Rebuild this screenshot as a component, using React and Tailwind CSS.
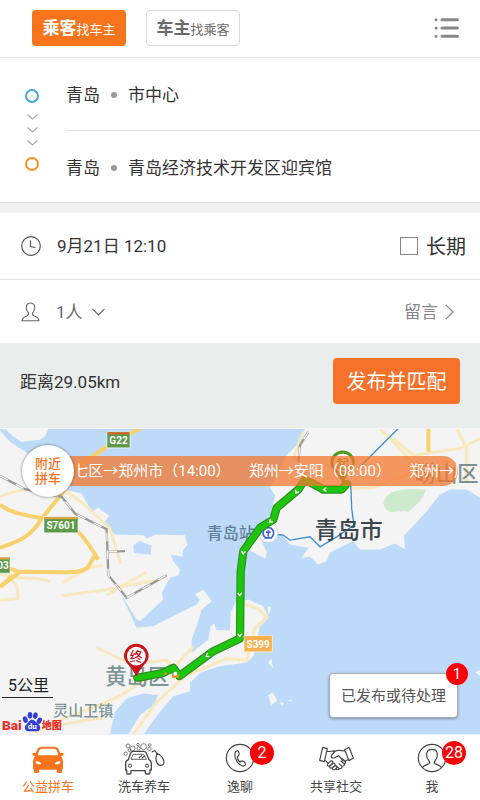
import React from "react";

const FONT = "font-['Roboto','Noto_Sans_CJK_SC',sans-serif]";

function Chevron({ className, points, box }) {
  return (
    <svg className={className} viewBox={box} fill="none" stroke="currentColor" strokeWidth="1.2" aria-hidden="true">
      <polyline points={points} />
    </svg>
  );
}

function Header() {
  return (
    <header className="flex h-[58px] items-center justify-between border-b border-[#e2e2e2] bg-white pl-8 pr-5 pb-px">
      <div className="flex gap-5">
        <button className="flex h-9 w-[94px] items-center justify-center rounded bg-[#f7741c] text-white">
          <span className="text-[17px] leading-6 font-bold">乘客</span>
          <span className="pt-[3px] text-[13px] leading-6">找车主</span>
        </button>
        <button className="flex h-9 w-[94px] items-center justify-center rounded border border-[#dcdcdc] bg-white text-[#6b6b6b]">
          <span className="text-[17px] leading-6 font-bold">车主</span>
          <span className="pt-[3px] text-[13px] leading-6">找乘客</span>
        </button>
      </div>
      <button aria-label="菜单">
        <svg className="h-5 w-[26px]" viewBox="0 0 26 20" stroke="#888" strokeWidth="3" strokeLinecap="round" aria-hidden="true">
          <path d="M2 1.8h.1M2 10h.1M2 18.2h.1M8 1.8h15.500M8 10h15.500M8 18.2h15.500" />
        </svg>
      </button>
    </header>
  );
}

function Place({ city, name, className }) {
  return (
    <button className={"flex w-full items-center pt-0.5 text-left text-[17px] leading-6 text-[#333] " + className}>
      <span>{city}</span>
      <span className="mx-[11px] size-[6px] rounded-full bg-[#999]" />
      <span>{name}</span>
    </button>
  );
}

function Route() {
  return (
    <section className="flex border-b border-[#dcdcdc] bg-white">
      <div className="flex w-[66px] shrink-0 flex-col items-center pt-[31px] pr-0.5 pb-[31px]">
        <span className="size-[14px] rounded-full border-2 border-[#45a5e2]" />
        <div className="flex flex-1 flex-col items-center justify-center gap-[7px] text-[#aaa]">
          <Chevron className="h-[6px] w-[11px]" box="0 0 11 6" points="0.500,0.500 5.500,5 10.500,0.500" />
          <Chevron className="h-[6px] w-[11px]" box="0 0 11 6" points="0.500,0.500 5.500,5 10.500,0.500" />
          <Chevron className="h-[6px] w-[11px]" box="0 0 11 6" points="0.500,0.500 5.500,5 10.500,0.500" />
        </div>
        <span className="size-[14px] rounded-full border-2 border-[#f8931f]" />
      </div>
      <div className="flex-1">
        <Place city="青岛" name="市中心" className="h-[73px] border-b border-[#e6e6e6]" />
        <Place city="青岛" name="青岛经济技术开发区迎宾馆" className="h-[71px]" />
      </div>
    </section>
  );
}

function Options() {
  return (
    <section className="border-t-[10px] border-[#f1f1f1] bg-white">
      <div className="flex h-[67px] items-center justify-between border-b border-[#e4e4e4] pl-[21px] pr-[14px]">
        <button className="flex items-center gap-4 text-[17px] leading-6 text-[#333]">
          <svg className="size-5" viewBox="0 0 20 20" fill="none" stroke="#555" strokeWidth="1.200" aria-hidden="true">
            <circle cx="10" cy="10" r="9.300" />
            <path d="M9.500 4.500v6l5 1" />
          </svg>
          <span>9月21日 12:10</span>
        </button>
        <label className="flex items-center gap-2 text-xl leading-6 text-[#333]">
          <input type="checkbox" className="size-[18px] appearance-none border border-[#888] bg-white checked:bg-[#f7741c]" />
          <span className="pt-0.5">长期</span>
        </label>
      </div>
      <div className="flex h-[63px] items-center justify-between pl-[21px] pr-[26px]">
        <button className="flex items-center text-[17px] leading-6 text-[#666]">
          <svg className="mr-4 h-5 w-[19px]" viewBox="0 0 19 20" fill="none" stroke="#666" strokeWidth="1.100" strokeLinejoin="round" aria-hidden="true">
            <path d="M9.500 1C6.500 1 5 3 5.300 6c.2 2.500 1 4 2.200 5 .3 1.500-.3 2.300-1.800 2.900C2.500 15 1 15.800 1 18.800h17c0-3-1.500-3.800-4.700-4.900-1.500-.6-2.100-1.400-1.800-2.900 1.200-1 2-2.500 2.200-5 .3-3-1.200-5-4.200-5z" />
          </svg>
          <span>1人</span>
          <Chevron className="ml-[9px] h-2 w-[13px]" box="0 0 13 8" points="0.500,0.800 6.500,6.800 12.500,0.800" />
        </button>
        <button className="flex items-center gap-[7px] text-[17px] leading-6 text-[#888]">
          <span>留言</span>
          <Chevron className="h-4 w-[9px]" box="0 0 9 16" points="0.800,0.800 8,8 0.800,15.200" />
        </button>
      </div>
    </section>
  );
}

function Publish() {
  return (
    <section className="flex h-[86px] items-center justify-between border-b border-[#f4f4f4] bg-[#e9eeed] px-5 pb-[9px]">
      <span className="pt-0.5 text-[17px] leading-6 text-[#333]">距离29.05km</span>
      <button className="h-[46px] w-[127px] rounded bg-[#f6712a] pt-0.5 text-xl leading-6 text-white">发布并匹配</button>
    </section>
  );
}

function RoadSign({ x, y, w, label, fill, edge }) {
  return (
    <g>
      <rect x={x} y={y} width={w} height="48" fill={fill} stroke="#fff" strokeOpacity="0.6" strokeWidth="3" />
      <rect x={x + 2} y={y + 1} width={w - 4} height="6" fill={edge} />
      <text x={x + w / 2} y={y + 36} fontSize="30" fontWeight="700" fill="#fff" textAnchor="middle">
        {label}
      </text>
    </g>
  );
}

function Pin({ x, y, color, label }) {
  return (
    <g>
      <path d={`M${x - 37} ${y}a37 37 0 1 1 74 0c0 20 -25 30 -37 62c-12 -32 -37 -42 -37 -62z`} fill={color} />
      <circle cx={x} cy={y} r="28" fill="#fff" />
      <text x={x} y={y + 14} fontSize="39" fontWeight="500" fill={color} textAnchor="middle">
        {label}
      </text>
    </g>
  );
}

const ROUTE = "M1040 166 L1025 183 L970 183 L915 153 L895 183 L830 238 L820 273 L780 298 L730 368 L722 430 L720 630 L640 668 L538 743 L520 718 L490 733 L412 748";
const ARROWS = [
  [975, 183, 90],
  [890, 190, 30],
  [812, 278, 50],
  [730, 372, 10],
  [719, 497, 0],
  [719, 620, 0],
  [622, 681, 60],
];

function MapCanvas() {
  return (
    <svg className="absolute inset-0 size-full" viewBox="0 0 1440 918" preserveAspectRatio="xMidYMid slice" role="img" aria-label="路线地图">
      <rect width="1440" height="918" fill="#bddbf8" />
      <g fill="#f4f4f4">
        <path d="M14 0 L40 24 L65 40 L120 34 L136 22 L146 0z" />
        <path d="M0 6 L30 40 L70 66 L120 100 L180 180 L245 195 L275 250 L295 238 L328 262 L310 285 L345 318 L430 320 L440 330 L470 318 L555 320 L562 350 L548 365 L548 385 L512 378 L518 395 L540 423 L535 440 L510 448 L485 493 L490 513 L420 578 L408 570 L360 493 L410 598 L460 593 L590 528 L600 513 L585 498 L610 483 L635 518 L605 543 L595 578 L575 633 L575 673 L625 633 L632 593 L642 585 L650 605 L690 605 L692 553 L705 523 L745 513 L790 533 L805 568 L780 593 L760 683 L740 702 L660 713 L600 733 L570 763 L570 788 L520 803 L485 843 L430 918 L0 918z" />
        <path d="M915 0 L895 45 L860 80 L825 150 L810 178 L825 200 L812 258 L730 348 L750 366 L795 390 L800 370 L780 328 L845 318 L870 348 L925 358 L905 388 L930 385 L955 408 L980 398 L990 372 L1060 338 L1080 363 L1140 363 L1185 345 L1215 362 L1212 322 L1280 248 L1320 198 L1350 183 L1400 183 L1440 208 L1440 0z" />
        <path d="M806 560l-4-28 12 6zM805 702l14 18-5-30zM804 800l14-8 14 24-18 14zM838 820l14 4-6 8zM864 816l12-4-4 6zM1425 732l15-8v18z" />
      </g>
      <path d="M330 918 L345 850 L380 810 L430 795 L475 800 L460 830 L420 860 L385 918z M400 350l18-12 36 12-2 28-50-4z" fill="#bddbf8" />
      <path d="M1150 225 C1160 175 1230 180 1278 183 C1270 215 1240 235 1225 250 C1200 240 1160 270 1150 225z" fill="#ceeacd" />

      <g fill="none" stroke="#f8e8bd" strokeWidth="9" strokeLinejoin="round">
        <path d="M0 205 C60 175 140 180 195 185 L250 225 L330 300 L362 405" />
        <path d="M0 435 C60 460 100 440 150 460 M190 462 C230 440 270 410 310 412 M320 500 L440 430" />
        <path d="M185 502 L310 485 L480 453 M0 515 L55 510 L50 470 L20 440" />
        <path d="M290 658 L390 705 L500 695 L520 718 L580 653 M100 918 C200 850 330 840 420 760 L520 720" />
        <path d="M150 893 L310 868 M400 918 L470 820 L560 740 L680 690 L740 695 L765 600 L800 565 L775 540 L725 525" />
        <path d="M910 10 L880 90 M1140 0 L1190 50 L1250 120 L1290 130 M1370 0 L1400 60 L1400 160 M1180 30 L1240 80 L1380 60 L1440 30 M1040 180 L1120 178 L1240 130 L1330 150" />
      </g>
      <g fill="none" stroke="#f8d16c" strokeWidth="12" strokeLinejoin="round">
        <path d="M420 0 L330 48 L225 120 L190 190 L125 270 C90 330 50 340 0 358" />
        <path d="M0 228 C30 255 90 262 130 270 M235 310 C260 335 275 360 295 394 M285 380 L265 415 C240 438 210 430 60 430 L0 475" />
        <path d="M0 475 L40 440 M30 420 L60 432 M1285 0 V70" />
      </g>
      <g fill="none">
        <path d="M0 142 L75 182 L185 205 L225 255 L320 302 L325 440 L380 508 L500 440 M325 370 L375 368 M925 10 L900 50 L895 100" stroke="#999" strokeWidth="7" />
        <path d="M0 142 L75 182 L185 205 L225 255 L320 302 L325 440 L380 508 L500 440 M325 370 L375 368 M925 10 L900 50 L895 100" stroke="#f4f4f4" strokeWidth="4" strokeDasharray="26 28" />
        <path d="M1195 0 L1125 70 L1075 120 M1052 160 L1055 240 L1062 290 L1010 325 L960 355 L930 325 L870 335 L850 320 L830 318" stroke="#3c8fd0" strokeWidth="4" />
      </g>

      <g fontWeight="500">
        <text x="620" y="330" fontSize="48" fill="#5f7e99">青岛站</text>
        <text x="944" y="328" fontSize="68" fill="#3a454c">青岛市</text>
        <text x="1244" y="156" fontSize="64" fill="#7f8e8e">崂山区</text>
        <text x="316" y="766" fontSize="64" fill="#7b9494">黄岛区</text>
        <text x="160" y="863" fontSize="45" fill="#7b9494">灵山卫镇</text>
      </g>
      <circle cx="805" cy="313" r="29" fill="#fff" stroke="#b8c4d8" strokeWidth="2" />
      <path d="M795 326a16 16 0 1 1 20 0M805 305v20M793 328h24M798 311h14" fill="none" stroke="#3a62dd" strokeWidth="5" />

      <Pin x={1028} y={103} color="#4d9a1b" label="起" />
      <path d={ROUTE} fill="none" stroke="#2f8a25" strokeWidth="25" strokeLinejoin="round" strokeLinecap="round" />
      <path d={ROUTE} fill="none" stroke="#1dc60d" strokeWidth="18" strokeLinejoin="round" strokeLinecap="round" />
      <g fill="none" stroke="#fff" strokeWidth="4">
        {ARROWS.map(([x, y, r]) => (
          <path key={`${x}-${y}`} d="M-6 -4 L0 4 L6 -4" transform={`translate(${x} ${y}) rotate(${r})`} />
        ))}
      </g>
      <path d="M494 730l8 4-8 8zM516 738h20v10h-20z" fill="#fb8a1c" />
      <circle cx="526" cy="736" r="6" fill="#fff" />
      <Pin x={409} y={683} color="#c8131a" label="终" />

      <RoadSign x={321} y={10} w={69} label="G22" fill="#5b994b" edge="#d9642a" />
      <RoadSign x={132} y={265} w={102} label="S7601" fill="#5b994b" edge="#e8a33a" />
      <RoadSign x={-50} y={386} w={80} label="G203" fill="#5b994b" edge="#e8a33a" />
      <RoadSign x={732} y={622} w={85} label="S399" fill="#f5b04d" edge="#f5b04d" />
    </svg>
  );
}

function BaiduLogo() {
  return (
    <svg className="h-5 w-[60px]" viewBox="0 0 180 60" role="img" aria-label="百度地图">
      <text x="0" y="53" fontSize="41" fontWeight="900" fill="#e8312c">Bai</text>
      <g fill="#3340d8">
        <ellipse cx="70" cy="23" rx="7" ry="10" transform="rotate(-20 70 23)" />
        <ellipse cx="84" cy="10" rx="7" ry="10" />
        <ellipse cx="100" cy="11" rx="7" ry="10" transform="rotate(12 100 11)" />
        <ellipse cx="112" cy="26" rx="7" ry="10" transform="rotate(25 112 26)" />
        <path d="M90 23c-8 0-10 8-16 13-7 6-8 22 6 22h24c14 0 13-16 5-22-7-5-10-13-19-13z" />
      </g>
      <text x="91" y="52" fontSize="24" fontWeight="700" fill="#fff" textAnchor="middle">du</text>
      <text x="119" y="52" fontSize="30" fontWeight="900" fill="#e8312c">地图</text>
    </svg>
  );
}

function MapPanel() {
  return (
    <section className="relative min-h-[305px] flex-1 overflow-hidden bg-[#bddbf8]">
      <MapCanvas />
      <div className="absolute top-[27px] right-[22px] left-[46px] flex h-[30px] items-center overflow-hidden rounded-r-full bg-[#f4772f]/75 pl-8">
        <div className="flex flex-1 justify-end overflow-hidden">
          <p className="-mr-[26px] flex shrink-0 gap-[18px] text-[15px] leading-6 whitespace-nowrap text-white">
            <span>二七区→郑州市（14:00）</span>
            <span>郑州→安阳（08:00）</span>
            <span>郑州→周口</span>
          </p>
        </div>
      </div>
      <button className="absolute top-4 left-[22px] size-[52px] rounded-full bg-white text-[13px] leading-[15px] font-medium text-[#f7741c] shadow-[0_0_3px_rgba(0,0,0,0.5)]">
        附近
        <br />
        拼车
      </button>
      <div className="absolute bottom-[2px] left-[2px] flex flex-col items-start">
        <span className="mb-[14px] border-b border-[#222] pr-1 pl-[6px] text-base leading-[23px] text-[#222]">5公里</span>
        <BaiduLogo />
      </div>
      <button className="absolute right-[22px] bottom-4 h-[45px] w-[129px] rounded border border-[#a5acb5] bg-white text-[15px] leading-6 text-[#555] shadow-[0_1px_3px_rgba(0,0,0,0.35)]">
        已发布或待处理
        <span className="absolute -top-[11px] -right-[11px] flex size-[22px] items-center justify-center rounded-full bg-[#fb0007] text-[15px] leading-none text-white">1</span>
      </button>
    </section>
  );
}

function CarIcon() {
  return (
    <svg className="h-[34px] w-[34px]" viewBox="91 30 102 102" fill="currentColor" aria-hidden="true">
      <path fillRule="evenodd" d="M122 47h40q9 0 12 8l5 12 7-2q4 2 2 8l-7 3q6 6 6 14v20q0 4-2 5v6q0 5-6 5h-5q-6 0-6-5v-5h-52v5q0 5-6 5h-5q-6 0-6-5v-6q-2-1-2-5V90q0-8 6-14l-7-3q-2-6 2-8l7 2 5-12q3-8 12-8zM123 53q-5 0-7 5l-5 15h62l-5-15q-2-5-7-5zM105 90q0 10 8 10h9q-3-9-17-10zM179 90q-14 1-17 10h9q8 0 8-10z" />
    </svg>
  );
}

function WashIcon() {
  return (
    <svg className="h-[34px] w-11" viewBox="365 35 132 102" fill="none" stroke="#444" strokeWidth="4" strokeLinejoin="round" aria-hidden="true">
      <path d="M384 91l7-20q2-5 8-5h30q7 0 9 5l8 20q7 4 7 11v20h-4v8q0 4-4 4h-5q-5 0-5-4v-6h-43v6q0 4-4 4h-5q-4 0-4-4v-8h-3v-20q0-8 8-11z" />
      <path d="M392 90l6-15h32l8 15z" strokeWidth="2.500" />
      <circle cx="389" cy="109" r="5" strokeWidth="3" />
      <circle cx="440" cy="109" r="5" strokeWidth="3" />
      <path d="M454 68l9-4 7 8q14 6 20 21 3 14-8 15-14 0-15-19 0-8 3-17M415 86l10-8M424 87l10-8" strokeWidth="3.500" />
      <g strokeWidth="2">
        <circle cx="383" cy="50" r="6" />
        <circle cx="376" cy="73" r="5" />
        <circle cx="387" cy="63" r="4" />
        <circle cx="397" cy="57" r="7" />
        <circle cx="413" cy="46" r="4" />
        <circle cx="415" cy="57" r="5" />
        <circle cx="430" cy="52" r="9" />
        <circle cx="448" cy="47" r="4" />
        <circle cx="447" cy="59" r="5" />
      </g>
    </svg>
  );
}

function PhoneIcon() {
  return (
    <svg className="h-[34px] w-[34px]" viewBox="21 17 102 102" fill="none" stroke="#444" strokeWidth="3.500" strokeLinejoin="round" aria-hidden="true">
      <circle cx="72" cy="68" r="41" />
      <path d="M63 46c-7 3-8 14-4 24 4 11 12 20 21 22 6 1 9-3 8-7-1-5-8-9-12-8-3 1-3 4-5 3-4-4-7-10-7-15 0-3 4-3 5-6 1-6-2-14-6-13z" />
    </svg>
  );
}

function HandsIcon() {
  return (
    <svg className="h-[34px] w-9" viewBox="234 32 108 102" fill="none" stroke="#444" strokeWidth="3.500" strokeLinejoin="round" strokeLinecap="round" aria-hidden="true">
      <path d="M248 51l14 4-9 39-14-4zM314 58l13-7 13 32-13 8zM260 63c10 2 16-2 26-1l-12 14c-2 7 6 9 12 5l10-5c5 3 9 12 14 16M286 62c8-3 18-2 29 0M254 90c4 0 6 5 9 7M323 88c-4 2-6 3-8 6" />
      <path d="M263 101l9-9c6-2 9 3 5 7l-8 8c-6 1-9-2-6-6zM269 108l10-9c5-1 8 3 5 7l-8 7c-5 1-8-1-7-5zM277 113l8-7c5 0 7 4 4 7l-5 5c-5 1-8-1-7-5zM288 116c5 4 9 2 9-2 6 2 10-1 9-6 6 0 8-4 7-8 5-2 4-6 1-9l-8-7M297 114l-6-6M306 108l-9-8M312 100l-9-8" />
    </svg>
  );
}

function MeIcon() {
  return (
    <svg className="h-[34px] w-[34px]" viewBox="524 34 102 102" fill="none" stroke="#444" strokeWidth="3.500" strokeLinejoin="round" aria-hidden="true">
      <circle cx="575" cy="85" r="41" />
      <path d="M546 114c4-7 12-8 19-11 4-2 4-6 1-9-5-5-8-11-7-21 1-9 7-14 16-14s15 5 16 14c1 10-2 16-7 21-3 3-3 7 1 9 7 3 15 4 19 11" />
    </svg>
  );
}

const TABS = [
  { label: "公益拼车", Icon: CarIcon, active: true },
  { label: "洗车养车", Icon: WashIcon },
  { label: "逸聊", Icon: PhoneIcon, badge: "2" },
  { label: "共享社交", Icon: HandsIcon },
  { label: "我", Icon: MeIcon, badge: "28" },
];

function TabBar() {
  return (
    <nav className="grid h-[66px] grid-cols-5 border-t border-[#eef2f6] bg-white">
      {TABS.map(({ label, Icon, active, badge }) => (
        <a key={label} href="#" className={"flex flex-col items-center pt-[6px] text-[13px] leading-[18px] " + (active ? "text-[#f7741c]" : "text-[#444]")}>
          <span className="relative">
            <Icon />
            {badge && (
              <span className="absolute top-0 left-[27px] flex h-6 min-w-6 items-center justify-center rounded-full bg-[#fb0007] text-base leading-none text-white">{badge}</span>
            )}
          </span>
          <span className="mt-[3px]">{label}</span>
        </a>
      ))}
    </nav>
  );
}

export default function App() {
  return (
    <main className={"flex min-h-screen flex-col bg-white " + FONT}>
      <Header />
      <Route />
      <Options />
      <Publish />
      <MapPanel />
      <TabBar />
    </main>
  );
}
